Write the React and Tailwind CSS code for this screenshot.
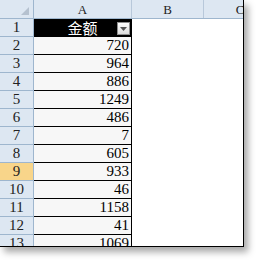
import React from 'react';

const values = [720, 964, 886, 1249, 486, 7, 605, 933, 46, 1158, 41, 1069];

const serif = { fontFamily: '"Liberation Serif", "DejaVu Serif", serif' };

const FilterButton = () => (
  <div className="absolute right-[1px] top-[3px] flex h-[13px] w-[13px] items-center justify-center border border-[#8d8d8d] bg-gradient-to-b from-[#ffffff] to-[#dcdcdc]">
    <svg width="7" height="4" viewBox="0 0 7 4">
      <path d="M0 0 L7 0 L3.5 4 Z" fill="#555" />
    </svg>
  </div>
);

export default function App() {
  return (
    <div className="h-[269px] w-[265px] bg-white">
      <div
        className="h-[247px] w-[244px] overflow-hidden border-b border-r border-black bg-white shadow-[4px_5px_7px_rgba(0,0,0,0.35)]"
        style={serif}
      >
        {/* header row */}
        <div className="flex h-[19px] border-b border-[#9eb6ce] bg-[#dde7f2] text-[13px] text-[#222]">
          <div className="relative w-[34px] shrink-0 border-r border-[#9eb6ce]">
            <svg className="absolute right-[4px] bottom-[3px]" width="8" height="8" viewBox="0 0 8 8">
              <path d="M8 0 L8 8 L0 8 Z" fill="#b5c1cf" />
            </svg>
          </div>
          <div className="flex w-[98px] shrink-0 items-center justify-center border-r border-[#b8c8da] leading-none">A</div>
          <div className="flex w-[72px] shrink-0 items-center justify-center border-r border-[#b8c8da] leading-none">B</div>
          <div className="flex w-[72px] shrink-0 items-center justify-center leading-none">C</div>
        </div>

        {/* row 1 */}
        <div className="flex h-[18px]">
          <div className="flex w-[34px] shrink-0 items-center justify-center border-b border-r border-[#9eb6ce] bg-[#dde7f2] text-[15px] leading-none text-[#222]">
            1
          </div>
          <div
            className="relative flex w-[98px] shrink-0 items-center justify-center border-b border-r border-black bg-black text-[15px] leading-none text-white"
            style={{ fontFamily: '"Noto Sans CJK SC", sans-serif' }}
          >
            金额
            <FilterButton />
          </div>
          <div className="w-[144px] shrink-0" />
        </div>

        {values.map((v, i) => {
          const row = i + 2;
          const selected = row === 9;
          return (
            <div key={row} className="flex h-[18px]">
              <div
                className={`flex w-[34px] shrink-0 items-center justify-center border-b border-r border-[#9eb6ce] text-[15px] leading-none text-[#222] ${
                  selected ? 'bg-[#f8d58a]' : 'bg-[#dde7f2]'
                }`}
              >
                {row}
              </div>
              <div className="flex w-[98px] shrink-0 items-center justify-end border-b border-r border-black bg-[#f7f7f7] pr-[2px] text-[15px] leading-none text-black">
                {v}
              </div>
              <div className="w-[144px] shrink-0" />
            </div>
          );
        })}
      </div>
    </div>
  );
}
